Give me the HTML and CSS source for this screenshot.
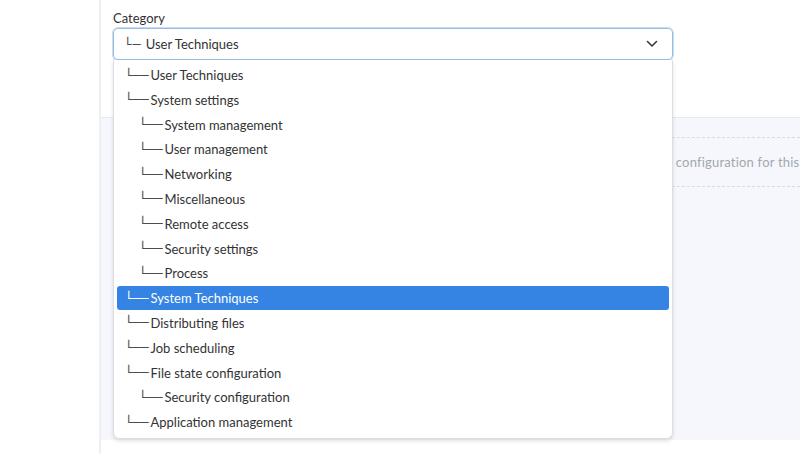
FILE: index.html
```html
<!DOCTYPE html>
<html>
<head>
<meta charset="utf-8">
<link rel="stylesheet" href="styles.css">
</head>
<body>
<div class="layout">
  <aside class="sidebar"></aside>
  <main class="main">
    <div class="field">
      <label class="field-label">Category</label>
      <div class="select">
        <span class="select-value"><span class="tree tree-short">└─</span>User Techniques</span>
        <svg class="chevron" width="12" height="8" viewBox="0 0 12 8"><path d="M1.5 1.5 L6 6 L10.5 1.5" fill="none" stroke="#3a3a3a" stroke-width="1.6" stroke-linecap="round" stroke-linejoin="round"/></svg>
      </div>
    </div>
    <section class="panel">
      <div class="empty">
        <span class="empty-text">There is no configuration for this type yet.</span>
      </div>
    </section>
    <ul class="menu">
      <li class="item"><span class="tree">└──</span>User Techniques</li>
      <li class="item"><span class="tree">└──</span>System settings</li>
      <li class="item lvl2"><span class="tree">└──</span>System management</li>
      <li class="item lvl2"><span class="tree">└──</span>User management</li>
      <li class="item lvl2"><span class="tree">└──</span>Networking</li>
      <li class="item lvl2"><span class="tree">└──</span>Miscellaneous</li>
      <li class="item lvl2"><span class="tree">└──</span>Remote access</li>
      <li class="item lvl2"><span class="tree">└──</span>Security settings</li>
      <li class="item lvl2"><span class="tree">└──</span>Process</li>
      <li class="item selected"><span class="tree">└──</span>System Techniques</li>
      <li class="item"><span class="tree">└──</span>Distributing files</li>
      <li class="item"><span class="tree">└──</span>Job scheduling</li>
      <li class="item"><span class="tree">└──</span>File state configuration</li>
      <li class="item lvl2"><span class="tree">└──</span>Security configuration</li>
      <li class="item"><span class="tree">└──</span>Application management</li>
    </ul>
  </main>
</div>
</body>
</html>
```
FILE: styles.css
```css
html, body {
  margin: 0;
  padding: 0;
  background: #ffffff;
  font-family: "Lato", "Noto Sans", sans-serif;
  font-size: 13px;
  color: #333333;
  width: 800px;
  height: 454px;
  overflow: hidden;
}

.layout {
  display: flex;
  height: 454px;
}

.sidebar {
  width: 99px;
  flex: none;
  border-right: 2px solid #eef0f3;
  background: #ffffff;
}

.main {
  flex: 1;
  position: relative;
  display: flex;
  flex-direction: column;
  min-width: 0;
}

.field {
  padding: 10px 0 0 12px;
  height: 117px;
  box-sizing: border-box;
}

.field-label {
  display: block;
  font-size: 13px;
  line-height: 16px;
  color: #333333;
  height: 18px;
}

.select {
  width: 560px;
  height: 32px;
  box-sizing: border-box;
  border: 1px solid #97bde6;
  box-shadow: 0 0 0 1px #c9ddf2;
  border-radius: 5px;
  display: flex;
  align-items: center;
  justify-content: space-between;
  padding: 0 14px 0 10px;
}

.select-value {
  display: flex;
  align-items: center;
  color: #333333;
}

.tree {
  font-family: "DejaVu Sans", sans-serif;
  color: #4a4a4a;
  font-size: 13px;
  margin-right: 2px;
}

.tree-short {
  margin-right: 4px;
  letter-spacing: 1px;
}

.panel {
  flex: none;
  height: 323px;
  background: #f5f7fc;
  border-top: 1px solid #e6e9f1;
  box-sizing: border-box;
  padding: 19px 0 0 20px;
}

.empty {
  height: 50px;
  box-sizing: border-box;
  border-top: 1px dashed #d6dae3;
  border-bottom: 1px dashed #d6dae3;
  display: flex;
  align-items: center;
  padding-left: 486px;
  white-space: nowrap;
  overflow: hidden;
}

.empty-text {
  color: #a3a7af;
  font-size: 13px;
  letter-spacing: 0.2px;
}

.menu {
  position: absolute;
  top: 60px;
  left: 12px;
  width: 560px;
  margin: 0;
  padding: 3px 3px 4px 3px;
  box-sizing: border-box;
  list-style: none;
  background: #ffffff;
  border: 1px solid #dcdde0;
  border-top: none;
  border-radius: 0 0 6px 6px;
  box-shadow: 0 2px 4px rgba(0, 0, 0, 0.12);
  display: flex;
  flex-direction: column;
  gap: 0.8px;
}

.item {
  height: 24px;
  display: flex;
  align-items: center;
  padding-left: 8px;
  border-radius: 3px;
  color: #333333;
  white-space: nowrap;
}

.item.lvl2 {
  padding-left: 22px;
}

.item.selected {
  background: #3584e4;
  color: #ffffff;
}

.item.selected .tree {
  color: #ffffff;
}
```
